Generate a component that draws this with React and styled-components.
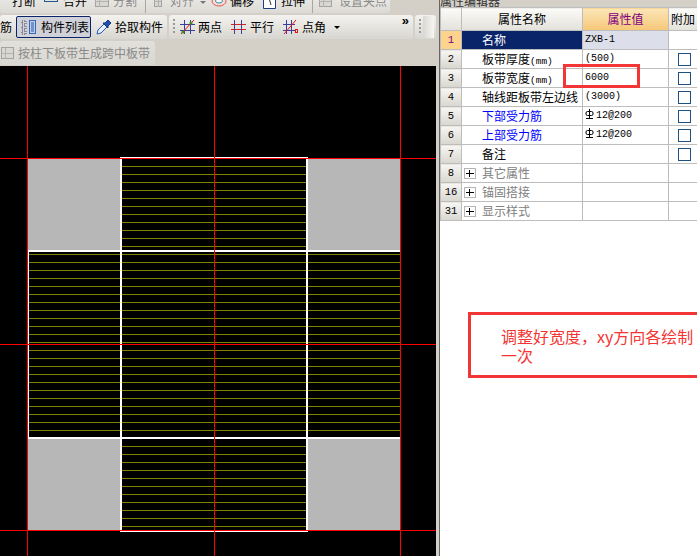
import React from "react";
import styled, { createGlobalStyle } from "styled-components";

const CJK = `"Noto Sans CJK SC", "Liberation Sans", sans-serif`;
const MONO = `"Liberation Mono", monospace`;

const GlobalStyle = createGlobalStyle`
  html, body {
    margin: 0;
    padding: 0;
    background: #fff;
    overflow: hidden;
  }
  body {
    font-family: ${CJK};
    font-size: 12px;
  }
`;

// Page
const Page = styled.div`
  position: relative;
  width: 697px;
  height: 556px;
  display: flex;
  overflow: hidden;
`;
const LeftPane = styled.div`
  width: 436px;
  flex: none;
  display: flex;
  flex-direction: column;
  background: #d4d0c8;
`;
const Splitter = styled.div`
  width: 4px;
  flex: none;
  background: #d4d0c8;
  border-right: 1px solid #666;
  box-sizing: border-box;
`;
const RightPane = styled.div`
  flex: 1;
  min-width: 0;
  background: #fff;
`;

// Toolbars
const ClippedBar = styled.div`
  width: 390px;
  height: 13px;
  flex: none;
  display: flex;
  align-items: flex-end;
  overflow: hidden;
  margin-bottom: 2px;
  border-radius: 0 0 3px 3px;
  background: linear-gradient(#e8e6e2, #dcdad4);
`;
const ToolRow = styled.div`
  height: 24px;
  flex: none;
  display: flex;
  gap: ${(p) => p.$gap || 0}px;
  margin-bottom: ${(p) => p.$below ?? 2}px;
`;
const ToolGroup = styled.div`
  width: ${(p) => p.$width}px;
  height: 24px;
  box-sizing: border-box;
  flex: none;
  display: flex;
  align-items: center;
  position: relative;
  padding-left: ${(p) => p.$pad || 0}px;
  border-radius: 3px;
  background: ${(p) =>
    p.$flat
      ? "linear-gradient(#e2e0db, #d9d7d1)"
      : "linear-gradient(#f3f2ef, #d8d6d0)"};
`;
const Tool = styled.div`
  display: flex;
  align-items: center;
  flex: none;
  height: 24px;
  line-height: 24px;
  gap: ${(p) => p.$gap ?? 3}px;
  margin-left: ${(p) => p.$left || 0}px;
  color: ${(p) => (p.$off ? "#8a8a8a" : "#000")};
  white-space: nowrap;
`;
const ActiveTool = styled(Tool)`
  box-sizing: border-box;
  width: 75px;
  height: 22px;
  padding-left: 4px;
  gap: 5px;
  border: 1px solid #0a246a;
  border-radius: 2px;
  background: #cfd0d8;
`;
const Grip = styled.span`
  width: 2px;
  height: 16px;
  flex: none;
  margin-left: ${(p) => p.$left || 0}px;
  background: repeating-linear-gradient(#9a9a9a 0 2px, transparent 2px 4px);
`;
const Sep = styled.span`
  width: 1px;
  height: 18px;
  flex: none;
  align-self: flex-end;
  margin-left: ${(p) => p.$left || 0}px;
  background: #aaa7a0;
`;
const Caret = styled.span`
  width: 0;
  height: 0;
  flex: none;
  margin-left: ${(p) => p.$left || 0}px;
  margin-bottom: ${(p) => p.$lift || 0}px;
  border-left: 3px solid transparent;
  border-right: 3px solid transparent;
  border-top: 3px solid ${(p) => p.$tone || "#000"};
`;
const Chevrons = styled.span`
  position: absolute;
  right: 4px;
  top: 0;
  font: bold 13px/12px "Liberation Sans", sans-serif;
`;
const Shine = styled.span`
  position: absolute;
  right: 2px;
  top: 1px;
  bottom: 1px;
  width: 11px;
  background: linear-gradient(90deg, #d9d7d1, #f7f6f4);
`;

// Drawing area
const Canvas = styled.svg`
  display: block;
  flex: none;
  width: 436px;
  height: 490px;
  background: #000;
  shape-rendering: crispEdges;
`;

// Property panel
const PanelTitle = styled.div`
  height: 7px;
  overflow: hidden;
  background: #d4d0c8;
  box-sizing: border-box;
  font-size: 12px;
  line-height: 1px;
  color: #333;
  white-space: nowrap;
`;
const PropTable = styled.table`
  border-collapse: collapse;
  table-layout: fixed;
  width: 257px;
  font-size: 12px;
  color: #000;
  tr {
    height: 19px;
  }
  td,
  th {
    padding: 0;
    border: 1px solid #bdbdbd;
    font-weight: normal;
    white-space: nowrap;
    overflow: hidden;
    line-height: 18px;
  }
`;
const HeadCell = styled.th`
  height: 22px;
  text-align: center;
  background: ${(p) =>
    p.$hot
      ? "linear-gradient(#fbe6b8, #f6c777)"
      : "linear-gradient(#fbfbf9, #e3e1da)"};
  color: ${(p) => (p.$hot ? "#800080" : "#000")};
`;
const RowNum = styled.td`
  text-align: center;
  font: 10.5px/18px ${MONO};
  background: ${(p) =>
    p.$hot ? "#fbd38c" : "linear-gradient(#f7f6f3, #d8d6cf)"};
  color: ${(p) => (p.$hot ? "#800080" : "#000")};
`;
const NameCell = styled.td`
  padding-left: 20px !important;
  background: ${(p) => (p.$selected ? "#0a246a" : "#fff")};
  color: ${(p) =>
    p.$selected ? "#fff" : p.$tone === "link" ? "#0000ff" : "#000"};
`;
const Unit = styled.span`
  font: 9.5px/0 ${MONO};
`;
const GroupCell = styled.td`
  color: #808080;
  padding-left: 2px !important;
`;
const ValueCell = styled.td`
  padding-left: 2px !important;
  font: 10px/18px ${MONO};
  background: ${(p) => (p.$selected ? "#dcdfe9" : "#fff")};
`;
const ExtraCell = styled.td`
  text-align: center;
  vertical-align: middle;
`;
const Check = styled.span`
  display: inline-block;
  width: 13px;
  height: 13px;
  box-sizing: border-box;
  margin: 3px 0 0 2px;
  border: 1px solid #1c5180;
  vertical-align: top;
`;
const Expander = styled.span`
  position: relative;
  display: inline-block;
  width: 12px;
  height: 11px;
  margin-right: 6px;
  box-sizing: border-box;
  border: 1px solid #b5b5b5;
  vertical-align: -1px;
  &::before,
  &::after {
    content: "";
    position: absolute;
    background: #000;
  }
  &::before {
    left: 1px;
    right: 1px;
    top: 4px;
    height: 1px;
  }
  &::after {
    top: 1px;
    bottom: 1px;
    left: 4px;
    width: 1px;
  }
`;
const BarMark = styled.svg`
  display: inline-block;
  width: 9px;
  height: 10px;
  margin-right: 2px;
  vertical-align: -1px;
`;

// Red annotations
const RedBox = styled.div`
  position: absolute;
  box-sizing: border-box;
  left: ${(p) => p.$x}px;
  top: ${(p) => p.$y}px;
  width: ${(p) => p.$w}px;
  height: ${(p) => p.$h}px;
  border: 3px solid #f33535;
`;
const Note = styled.div`
  position: absolute;
  left: 501px;
  top: 327px;
  width: 194px;
  color: #f33535;
  font-size: 16px;
  line-height: 19px;
`;

const Ico = ({ children, w = 15 }) => (
  <svg width={w} height="16" viewBox={`0 0 ${w} 16`} fill="none" style={{ flex: "none" }}>
    {children}
  </svg>
);

const ListIcon = () => (
  <Ico w={15}>
    <rect x="8.5" y="1.5" width="6" height="13" fill="#b9d0f2" stroke="#3a68b0" />
    <path d="M10 4h3M10 6h3M10 8h3M10 10h3M10 12h3" stroke="#2a55a0" />
    <path d="M1 2h4v3H1zM1 7h4v3H1zM1 12h4v3H1z" stroke="#445" strokeDasharray="1 1" />
  </Ico>
);
const DropperIcon = () => (
  <Ico w={15}>
    <path d="M1 15l1-4 6-6 3 3-6 6z" fill="#e6effb" stroke="#2a58b0" />
    <path d="M7 4l2 0 3-3 3 3-3 3 0 2z" fill="#1f4fb0" stroke="#17387f" />
  </Ico>
);
const TwoPointIcon = () => (
  <Ico w={15}>
    <path d="M0 5.5h15M0 11.5h15M4.5 1v14M10.5 1v14" stroke="#3a3f9a" />
    <path d="M1 15L14 1" stroke="#e11" />
    <circle cx="3" cy="13" r="1.6" fill="#3f8f20" />
    <circle cx="11" cy="4" r="1.6" fill="#3f8f20" />
  </Ico>
);
const ParallelIcon = () => (
  <Ico w={15}>
    <path d="M0 5.5h15M0 10.5h15" stroke="#d22" />
    <path d="M3.5 1v14M10.5 1v14" stroke="#3a3f9a" />
  </Ico>
);
const AngleIcon = () => (
  <Ico w={15}>
    <path d="M0 5.5h12M0 11.5h12M3.5 1v14M8.5 1v14" stroke="#3a3f9a" />
    <path d="M1 15L13 1" stroke="#e11" />
    <rect x="12.5" y="10.5" width="2" height="3" stroke="#e11" />
  </Ico>
);
const SplitBarIcon = () => (
  <Ico w={14}>
    <rect x="0.5" y="6.5" width="13" height="2" stroke="#22558f" />
    <rect x="0.5" y="0.5" width="13" height="3" stroke="#22558f" />
  </Ico>
);
const GhostIcon = ({ w = 15 }) => (
  <Ico w={w}>
    <rect x="1.5" y="2.5" width={w - 3} height="11" fill="#d9d7d1" stroke="#a5a39d" />
    <path d={`M1 8.5h${w - 3}M5.5 3v11`} stroke="#b5b3ad" />
  </Ico>
);
const OffsetIcon = () => (
  <Ico w={16}>
    <ellipse cx="8" cy="8" rx="7" ry="5" stroke="#d55" fill="#f7dcd4" />
    <ellipse cx="8" cy="8" rx="3.5" ry="2" stroke="#38a" fill="#fff" />
  </Ico>
);
const StretchIcon = () => (
  <Ico w={15}>
    <path d="M1.5 1.5h12v14h-12z" fill="#fff" stroke="#1f3f80" />
    <path d="M7 5l2 7" stroke="#333" />
  </Ico>
);
// steel grade mark in front of the bar size
const GradeMark = () => (
  <BarMark viewBox="0 0 9 10" fill="none">
    <path d="M4.5 0v9M1 9.5h7" stroke="#000" />
    <rect x="1" y="2.5" width="7" height="4" rx="1.5" stroke="#000" />
  </BarMark>
);

// yellow bars every 8px across a cell of the slab
const Bars = ({ x1, x2, y1, y2 }) => {
  const ys = [];
  for (let y = 166; y < 530; y += 8) {
    if (y > y1 && y < y2) ys.push(y);
  }
  return ys.map((y) => (
    <rect key={y} x={x1} y={y} width={x2 - x1} height="1" fill="#808000" />
  ));
};

const Drawing = () => (
  <Canvas viewBox="0 66 436 490">
    <Bars x1={122} x2={306} y1={158} y2={250} />
    <Bars x1={29} x2={120} y1={252} y2={437} />
    <Bars x1={122} x2={306} y1={252} y2={437} />
    <Bars x1={308} x2={400} y1={252} y2={437} />
    <Bars x1={122} x2={306} y1={439} y2={530} />

    <rect x="28" y="159" width="92" height="91" fill="#b7b7b7" />
    <rect x="308" y="159" width="92" height="91" fill="#b7b7b7" />
    <rect x="28" y="439" width="92" height="91" fill="#b7b7b7" />
    <rect x="308" y="439" width="92" height="91" fill="#b7b7b7" />

    <rect x="120" y="157" width="188" height="1" fill="#fff" />
    <rect x="28" y="250" width="372" height="2" fill="#fff" />
    <rect x="28" y="437" width="372" height="2" fill="#fff" />
    <rect x="120" y="531" width="188" height="1" fill="#fff" />
    <rect x="120" y="159" width="2" height="372" fill="#fff" />
    <rect x="306" y="159" width="2" height="372" fill="#fff" />
    <rect x="28" y="250" width="1" height="189" fill="#fff" />

    <rect x="27" y="66" width="1" height="490" fill="#f00" />
    <rect x="214" y="66" width="1" height="490" fill="#f00" />
    <rect x="400" y="66" width="1" height="490" fill="#f00" />
    <rect x="0" y="158" width="436" height="1" fill="#f00" />
    <rect x="0" y="344" width="436" height="1" fill="#f00" />
    <rect x="0" y="530" width="436" height="1" fill="#f00" />
  </Canvas>
);

const rows = [
  { n: 1, name: "名称", value: "ZXB-1", selected: true },
  { n: 2, name: "板带厚度", unit: "(mm)", value: "(500)", check: true },
  { n: 3, name: "板带宽度", unit: "(mm)", value: "6000", check: true },
  { n: 4, name: "轴线距板带左边线", value: "(3000)", check: true },
  { n: 5, name: "下部受力筋", value: "12@200", bar: true, tone: "link", check: true },
  { n: 6, name: "上部受力筋", value: "12@200", bar: true, tone: "link", check: true },
  { n: 7, name: "备注", value: "", check: true },
];
const groups = [
  { n: 8, name: "其它属性" },
  { n: 16, name: "锚固搭接" },
  { n: 31, name: "显示样式" },
];

export default function App() {
  return (
    <Page>
      <GlobalStyle />
      <LeftPane>
        <ClippedBar>
          <Tool $left={12}>打断</Tool>
          <Tool $left={8}><SplitBarIcon /></Tool>
          <Tool $left={5}>合并</Tool>
          <Tool $off $left={7}><GhostIcon w={16} />分割</Tool>
          <Sep $left={8} />
          <Tool $off $left={7} $gap={7}><GhostIcon w={10} />对齐</Tool>
          <Caret $left={6} $lift={9} $tone="#777" />
          <Tool $left={5}><OffsetIcon />偏移</Tool>
          <Tool $left={8} $gap={4}><StretchIcon />拉伸</Tool>
          <Sep $left={7} />
          <Tool $off $left={5} $gap={6}><GhostIcon />设置夹点</Tool>
        </ClippedBar>
        <ToolRow $gap={2}>
          <ToolGroup $width={167}>
            <Tool>筋</Tool>
            <ActiveTool $left={4}><ListIcon />构件列表</ActiveTool>
            <Tool $left={5} $gap={4}><DropperIcon />拾取构件</Tool>
          </ToolGroup>
          <ToolGroup $width={244} $pad={4}>
            <Grip />
            <Tool $left={5}><TwoPointIcon />两点</Tool>
            <Tool $left={9} $gap={4}><ParallelIcon />平行</Tool>
            <Tool $left={9} $gap={4}><AngleIcon />点角</Tool>
            <Caret $left={8} />
            <Chevrons>»</Chevrons>
          </ToolGroup>
          <ToolGroup $width={21} $pad={4}>
            <Grip />
            <Shine />
          </ToolGroup>
        </ToolRow>
        <ToolRow $below={1}>
          <ToolGroup $width={155} $flat>
            <Tool $off><GhostIcon />按柱下板带生成跨中板带</Tool>
          </ToolGroup>
        </ToolRow>
        <Drawing />
      </LeftPane>
      <Splitter />
      <RightPane>
        <PanelTitle>属性编辑器</PanelTitle>
        <PropTable>
          <colgroup>
            <col style={{ width: 21 }} />
            <col style={{ width: 121 }} />
            <col style={{ width: 86 }} />
            <col style={{ width: 29 }} />
          </colgroup>
          <thead>
            <tr>
              <HeadCell />
              <HeadCell>属性名称</HeadCell>
              <HeadCell $hot>属性值</HeadCell>
              <HeadCell>附加</HeadCell>
            </tr>
          </thead>
          <tbody>
            {rows.map((r) => (
              <tr key={r.n}>
                <RowNum $hot={r.selected}>{r.n}</RowNum>
                <NameCell $selected={r.selected} $tone={r.tone}>
                  {r.name}
                  {r.unit && <Unit>{r.unit}</Unit>}
                </NameCell>
                <ValueCell $selected={r.selected}>
                  {r.bar && <GradeMark />}
                  {r.value}
                </ValueCell>
                <ExtraCell>{r.check && <Check />}</ExtraCell>
              </tr>
            ))}
            {groups.map((g) => (
              <tr key={g.n}>
                <RowNum>{g.n}</RowNum>
                <GroupCell><Expander />{g.name}</GroupCell>
                <td />
                <td />
              </tr>
            ))}
          </tbody>
        </PropTable>
      </RightPane>
      <RedBox $x={563} $y={64} $w={77} $h={24} />
      <RedBox $x={468} $y={312} $w={240} $h={66} />
      <Note>调整好宽度，xy方向各绘制一次</Note>
    </Page>
  );
}
